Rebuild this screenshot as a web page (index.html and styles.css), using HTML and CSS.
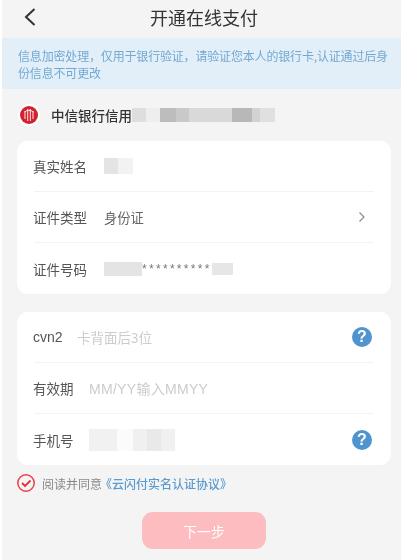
FILE: index.html
```html
<!DOCTYPE html>
<html lang="zh">
<head>
<meta charset="utf-8">
<title>开通在线支付</title>
<link rel="stylesheet" href="styles.css">
</head>
<body>
<div class="page">
  <header class="nav">
    <svg class="back" width="14" height="20" viewBox="0 0 14 20"><path d="M11.500 2 3 10l8.500 8" fill="none" stroke="#333" stroke-width="2"/></svg>
    <h1 class="title">开通在线支付</h1>
  </header>
  <p class="notice">信息加密处理，仅用于银行验证，请验证您本人的银行卡,认证通过后身份信息不可更改</p>
  <div class="bank">
    <svg class="bank-logo" width="22" height="22" viewBox="0 0 22 22"><circle cx="11" cy="11" r="11" fill="#fff"/><circle cx="11" cy="11" r="9" fill="#d4202f"/><path d="M7 7v8M9.700 5v12M12.300 5v12M15 7v8" stroke="#fff" stroke-width="0.900" fill="none"/><path d="M6.500 8q4.500-3.500 9 0" stroke="#fff" stroke-width="0.900" fill="none"/></svg>
    <span class="bank-name">中信银行信用</span>
    <span class="blur-bank"></span>
  </div>
  <section class="card first">
    <div class="row">
      <span class="label">真实姓名</span>
      <span class="blur-name"></span>
    </div>
    <div class="row">
      <span class="label">证件类型</span>
      <span class="value">身份证</span>
      <svg class="chev" width="8" height="12" viewBox="0 0 8 12"><path d="M1.500 1.500 6 6l-4.500 4.500" fill="none" stroke="#888" stroke-width="1.100"/></svg>
    </div>
    <div class="row">
      <span class="label">证件号码</span>
      <span class="blur-id"></span><span class="stars">**********</span><span class="blur-id2"></span>
    </div>
  </section>
  <section class="card second">
    <div class="row">
      <span class="label short">cvn2</span>
      <span class="ph">卡背面后3位</span>
      <span class="help">?</span>
    </div>
    <div class="row">
      <span class="label mid">有效期</span>
      <span class="ph wide">MM/YY输入MMYY</span>
    </div>
    <div class="row">
      <span class="label mid">手机号</span>
      <span class="blur-phone"></span>
      <span class="help">?</span>
    </div>
  </section>
  <div class="agree">
    <svg class="check" width="18" height="18" viewBox="0 0 18 18"><circle cx="9" cy="9" r="8.200" fill="none" stroke="#e8404c" stroke-width="1.500"/><path d="M5 9l3 3 5.500-5.500" fill="none" stroke="#e8303c" stroke-width="1.900"/></svg>
    <span class="agree-text">阅读并同意</span><span class="agree-link">《云闪付实名认证协议》</span>
  </div>
  <button class="next" type="button">下一步</button>
</div>
</body>
</html>
```
FILE: styles.css
```css
* { box-sizing: border-box; }
html, body { margin: 0; padding: 0; background: #fff; }
body { font-family: "Noto Sans CJK SC", "Liberation Sans", sans-serif; }
.page { width: 399px; height: 560px; margin-left: 2px; background: #f4f4f4; overflow: hidden; display: flex; flex-direction: column; filter: blur(0.4px); }
.nav { height: 38px; flex: none; display: flex; justify-content: center; position: relative; padding-left: 5px; }
.back { position: absolute; left: 21px; top: 7px; }
.title { margin: 0; font-size: 18px; font-weight: 400; color: #333; line-height: 34px; }
.notice { margin: 0; height: 51px; flex: none; background: #e3eff8; color: #72a9d2; font-size: 12px; line-height: 17px; padding: 9px 10px 0 16px; letter-spacing: -0.17px; }
.bank { height: 52px; flex: none; display: flex; align-items: center; padding-left: 16px; }
.bank-logo { flex: none; }
.bank-name { margin-left: 11px; font-size: 13.500px; font-weight: 500; color: #333; }
.blur-bank { width: 143px; height: 14px; background: linear-gradient(90deg, #dedede 0 14px, #eeeeee 14px 28px, #bdbdbd 28px 44px, #c9c9c9 44px 57px, #d9d9d9 57px 100px, #b8b8b8 100px 120px, #d2d2d2 120px 128px, #e0e0e0 128px); }
.card { flex: none; width: 374px; height: 153px; margin-left: 15px; background: #fff; border-radius: 11px; padding: 0 17px; }
.second { margin-top: 18px; }
.row { height: 51px; display: flex; align-items: center; border-bottom: 1px solid #f3f3f3; }
.row:last-child { border-bottom: 0; }
.label { width: 71px; flex: none; margin-left: -1px; font-size: 13.500px; color: #555; }
.label.short { width: 44px; font-family: "Liberation Sans", sans-serif; font-size: 14px; }
.label.mid { width: 56px; }
.value { font-size: 13.300px; color: #666; }
.chev { margin-left: auto; margin-right: 8px; }
.stars { font-family: "Liberation Sans", sans-serif; font-size: 12px; color: #777; letter-spacing: 2.300px; line-height: 14px; width: 70px; flex: none; }
.blur-name { width: 29px; height: 16px; background: linear-gradient(90deg, #e4e4e4 0 14px, #f2f2f2 14px); }
.blur-id { width: 38px; height: 14px; background: #e4e4e4; }
.blur-id2 { width: 21px; height: 12px; background: #e6e6e6; }
.blur-phone { width: 86px; height: 22px; background: linear-gradient(90deg, #f1f1f1 0 28px, #fbfbfb 28px 44px, #f0f0f0 44px 58px, #e9e9e9 58px 72px, #f0f0f0 72px); }
.ph { font-size: 13.500px; color: #ccc; }
.ph.wide { font-family: "Liberation Sans", "Noto Sans CJK SC", sans-serif; font-size: 14px; letter-spacing: 0.300px; }
.help { margin-left: auto; margin-right: 2px; width: 20px; height: 20px; border-radius: 50%; background: #4f93cf; color: #fff; font: 700 16px/20px "Liberation Sans", sans-serif; text-align: center; }
.agree { flex: none; display: flex; align-items: center; height: 18px; margin-top: 9px; padding-left: 15px; font-size: 12px; }
.check { flex: none; margin-right: 7px; }
.agree-text { color: #888; }
.agree-link { color: #5b9bd0; font-weight: 500; margin-left: -2px; }
.next { flex: none; align-self: flex-start; margin: 20px 0 0 140px; width: 124px; height: 37px; border: 0; border-radius: 11px; background: #fcbcc0; color: #fff; font-family: inherit; font-size: 14px; padding: 0; }
```
